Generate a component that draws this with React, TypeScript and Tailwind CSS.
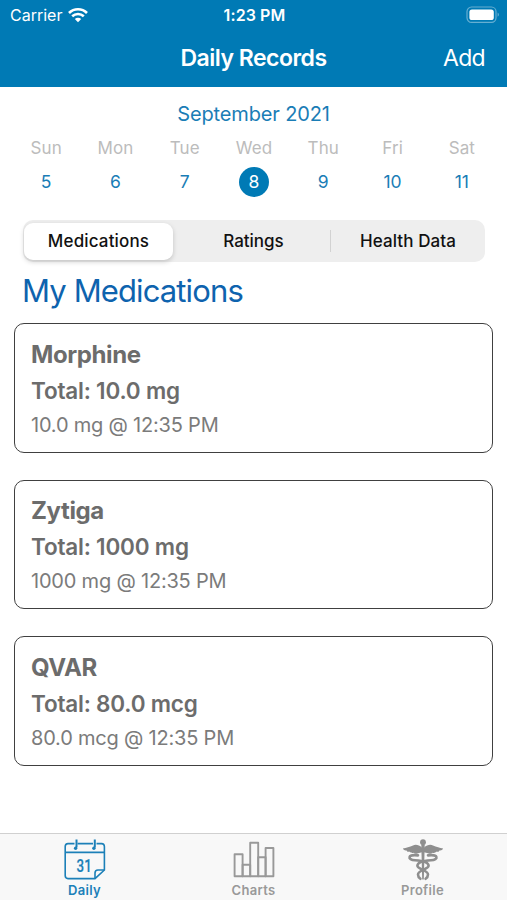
import React, { useState } from 'react';
import clsx from 'clsx';

const days = [
  { name: 'Sun', date: 5 },
  { name: 'Mon', date: 6 },
  { name: 'Tue', date: 7 },
  { name: 'Wed', date: 8 },
  { name: 'Thu', date: 9 },
  { name: 'Fri', date: 10 },
  { name: 'Sat', date: 11 },
];

const medications = [
  { name: 'Morphine', total: '10.0 mg', entry: '10.0 mg @ 12:35 PM' },
  { name: 'Zytiga', total: '1000 mg', entry: '1000 mg @ 12:35 PM' },
  { name: 'QVAR', total: '80.0 mcg', entry: '80.0 mcg @ 12:35 PM' },
];

function WifiIcon() {
  return (
    <svg width="20" height="16" viewBox="0 0 20 16" fill="none" stroke="white" strokeWidth="2.6">
      <path d="M1 6 C6 0.9 14 0.9 19 6" />
      <path d="M4.2 9.3 C7.5 6.2 12.5 6.2 15.8 9.3" />
      <path d="M10 15.2 L6.8 12 C8.6 10.3 11.4 10.3 13.2 12 Z" fill="white" stroke="none" />
    </svg>
  );
}

function BatteryIcon() {
  return (
    <svg width="34" height="18" viewBox="0 0 34 18" fill="none">
      <rect x="1" y="1" width="29" height="15.4" rx="4.6" stroke="white" strokeOpacity="0.4" strokeWidth="1.2" />
      <rect x="3.4" y="3.4" width="24.4" height="10.6" rx="2.6" fill="white" />
      <path d="M31.6 6.6 C33.4 7.4 33.4 10 31.6 10.8 Z" fill="white" fillOpacity="0.4" />
    </svg>
  );
}

function CalendarIcon() {
  return (
    <svg width="42" height="42" viewBox="0 0 42 42" fill="none" stroke="#1c80b8" strokeWidth="1.6">
      <path d="M10.5 4.6 H4 Q1.2 4.6 1.2 7.6 V36.6 Q1.2 39.6 4 39.6 H31 L40.4 31 V7.6 Q40.4 4.6 37.5 4.6 H32.5 M13.5 4.6 H29" />
      <path d="M1.2 13.4 H40.4" />
      <path d="M31 39.6 V34 Q31 31 34 31 H40.4" />
      <path d="M12.5 0.6 V8.5 M30.8 0.6 V8.5" strokeWidth="2" />
      <circle cx="11.6" cy="9.2" r="1.7" fill="#1c80b8" stroke="none" />
      <circle cx="29.9" cy="9.2" r="1.7" fill="#1c80b8" stroke="none" />
      <text
        x="20.2"
        y="33"
        textAnchor="middle"
        className="font-['Roboto',sans-serif] text-[18px] font-medium"
        fill="#1c80b8"
        stroke="#1c80b8"
        strokeWidth="0.2"
        textLength="15.5"
        lengthAdjust="spacingAndGlyphs"
      >
        31
      </text>
    </svg>
  );
}

function ChartsIcon() {
  return (
    <svg width="42" height="42" viewBox="0 0 42 42" fill="none" stroke="#999999" strokeWidth="1.9" strokeLinejoin="round">
      <rect x="1.6" y="15.2" width="8" height="22" />
      <rect x="9.6" y="25.8" width="7.6" height="11.4" />
      <rect x="17.2" y="3.8" width="8" height="33.4" />
      <rect x="25.2" y="18.2" width="7.4" height="19" />
      <rect x="32.6" y="9" width="7.8" height="28.2" />
    </svg>
  );
}

function ProfileIcon() {
  return (
    <svg width="42" height="42" viewBox="0 0 42 42" fill="none">
      <circle cx="21" cy="3.2" r="2.9" fill="#8e8e8e" />
      <path
        d="M20 8.8 C17 5.6 13.5 5.4 11 6.4 C7.5 7.8 4.5 8.8 0.8 9.4 C2 11.4 3.6 11.4 4.6 11.4 C5 12.8 6.8 13 8 12.8 C8.6 14 10.4 14.2 11.6 13.8 C12.4 15 14.4 15 16 14.2 L20 13.2 H22 L26 14.2 C27.6 15 29.6 15 30.4 13.8 C31.6 14.2 33.4 14 34 12.8 C35.2 13 37 12.8 37.4 11.4 C38.4 11.4 40 11.4 41.2 9.4 C37.5 8.8 34.5 7.8 31 6.4 C28.5 5.4 25 5.6 22 8.8 Z"
        fill="#8e8e8e"
      />
      <path d="M19.3 6 H22.7 L21.8 40.6 H20.2 Z" fill="#8e8e8e" />
      <g stroke="#8e8e8e" strokeLinecap="round" strokeWidth="2.6">
        <path d="M16 16.4 C5.5 14.8 5 20.8 13 21.2 C21 21.6 26.6 23.4 26.6 26.8 C26.6 30.4 16 31 16 35.4 C16 37.4 17 38.8 18.4 39.8" />
        <path d="M26 16.4 C36.5 14.8 37 20.8 29 21.2 C21 21.6 15.4 23.4 15.4 26.8 C15.4 30.4 26 31 26 35.4 C26 37.4 25 38.8 23.6 39.8" />
      </g>
    </svg>
  );
}

const tabs = [
  { name: 'Daily', Icon: CalendarIcon },
  { name: 'Charts', Icon: ChartsIcon },
  { name: 'Profile', Icon: ProfileIcon },
];

const segments = ['Medications', 'Ratings', 'Health Data'];

export default function App() {
  const [segment, setSegment] = useState('Medications');
  const [selected, setSelected] = useState(8);
  const [tab, setTab] = useState('Daily');

  return (
    <div className="flex h-[900px] w-[507px] flex-col overflow-hidden bg-white font-['Inter',sans-serif]">
      <header className="h-[87px] bg-[#007ab5] text-white">
        <div className="grid h-[30px] grid-cols-3 items-center pl-[10px] pr-[7px]">
          <div className="flex items-center gap-[6px]">
            <span className="text-[16px]">Carrier</span>
            <WifiIcon />
          </div>
          <span className="pr-px text-center text-[16px] font-semibold tracking-[0.1px]">1:23 PM</span>
          <div className="flex justify-end">
            <BatteryIcon />
          </div>
        </div>
        <div className="grid h-[56px] grid-cols-[1fr_auto_1fr] items-center px-[22px]">
          <span />
          <h1 className="text-[23px] font-semibold tracking-[-0.5px]">Daily Records</h1>
          <button className="justify-self-end text-[23px] tracking-[-0.7px]">Add</button>
        </div>
      </header>

      <section className="flex h-[133px] flex-col px-[11px] pt-[14px] text-[#1a7db6]">
        <h2 className="text-center text-[20px] leading-[26px] tracking-[-0.15px]">September 2021</h2>
        <div className="mt-[10px] grid grid-cols-7">
          {days.map((day) => (
            <button key={day.name} onClick={() => setSelected(day.date)} className="flex flex-col items-center pl-px">
              <span className="text-[17px] leading-[22px] tracking-[0.1px] text-[#bcbcbc]">{day.name}</span>
              <span
                className={clsx(
                  'mt-[8px] flex size-[30px] items-center justify-center rounded-full text-[17.5px]',
                  selected === day.date && 'bg-[#007ab5] text-white'
                )}
              >
                {day.date}
              </span>
            </button>
          ))}
        </div>
      </section>

      <div className="ml-[23px] mr-[22px] grid h-[42px] grid-cols-[149px_158px_1fr] items-center rounded-[10px] bg-[#eeeeee] px-px">
        {segments.map((name, i) => (
          <button
            key={name}
            onClick={() => setSegment(name)}
            className={clsx(
              'flex items-center justify-center pt-px text-[17px] font-medium text-[#111111]',
              segment === name
                ? 'h-[37px] rounded-[9px] bg-white shadow-[0_2px_5px_rgba(0,0,0,0.18)]'
                : 'h-[22px]',
              i === 0 && 'tracking-[0.15px]',
              i === 1 && 'border-r border-[#d2d2d2] pl-[4px]',
              i === 2 && 'pl-px tracking-[0.1px]'
            )}
          >
            {name}
          </button>
        ))}
      </div>

      <main className="flex-1">
        <h2 className="ml-[22px] mt-[9px] text-[31px] leading-[40px] tracking-[-0.88px] text-[#0e63ae]">My Medications</h2>
        <div className="mt-[12px] flex flex-col gap-[27px] px-[14px]">
          {medications.map((med) => (
            <article
              key={med.name}
              className="h-[129.5px] rounded-[10px] border border-[#404040] px-[16px] pt-[14.6px] text-[#6c6c6c]"
            >
              <h3 className="text-[24px] font-bold leading-[32px] tracking-[-0.4px]">{med.name}</h3>
              <p className="mt-[4px] text-[22.5px] font-semibold leading-[32px] tracking-[-0.2px]">Total: {med.total}</p>
              <p className="mt-[4px] text-[20px] leading-[28px] tracking-[-0.2px] text-[#7b7b7b]">{med.entry}</p>
            </article>
          ))}
        </div>
      </main>

      <nav className="grid h-[67px] grid-cols-3 border-t border-[#d0d0d0] bg-[#f8f8f8]">
        {tabs.map(({ name, Icon }) => (
          <button
            key={name}
            onClick={() => setTab(name)}
            className={clsx(
              'flex flex-col items-center pt-[5px] text-[13px] font-semibold leading-[16px] tracking-[0.3px]',
              tab === name ? 'text-[#1c80b8]' : 'text-[#999999]'
            )}
          >
            <Icon />
            <span className="mt-px">{name}</span>
          </button>
        ))}
      </nav>
    </div>
  );
}
